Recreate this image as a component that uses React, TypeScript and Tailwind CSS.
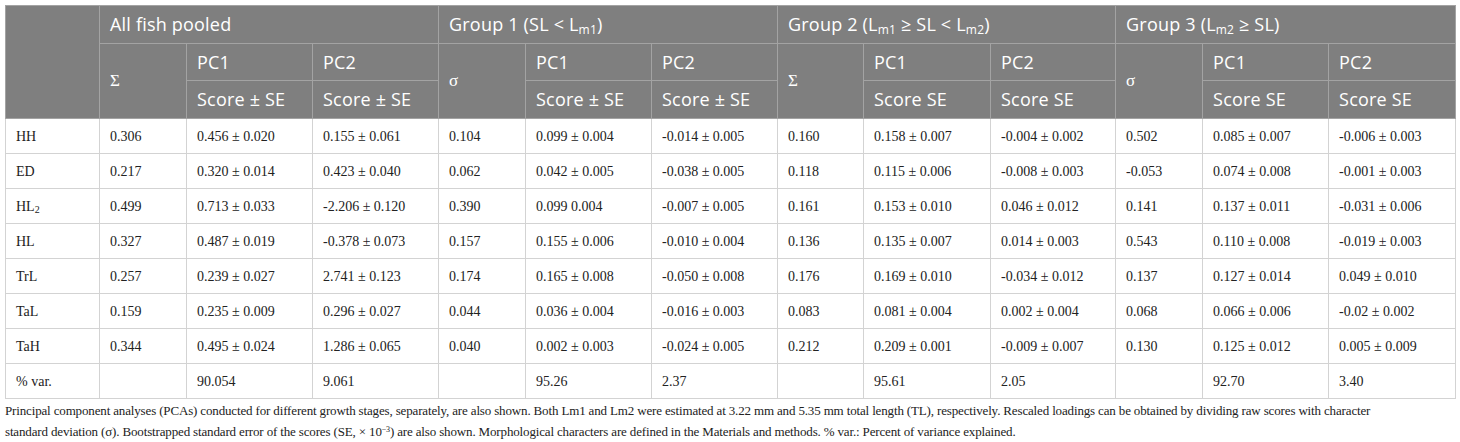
import React from 'react';

const widths = [94, 87, 126, 126, 87, 126, 126, 86, 127, 125, 87, 126, 127];

const rows: [React.ReactNode, ...string[]][] = [
  ['HH', '0.306', '0.456 ± 0.020', '0.155 ± 0.061', '0.104', '0.099 ± 0.004', '-0.014 ± 0.005', '0.160', '0.158 ± 0.007', '-0.004 ± 0.002', '0.502', '0.085 ± 0.007', '-0.006 ± 0.003'],
  ['ED', '0.217', '0.320 ± 0.014', '0.423 ± 0.040', '0.062', '0.042 ± 0.005', '-0.038 ± 0.005', '0.118', '0.115 ± 0.006', '-0.008 ± 0.003', '-0.053', '0.074 ± 0.008', '-0.001 ± 0.003'],
  [
    <>
      HL<sub className="text-[10px]">2</sub>
    </>,
    '0.499', '0.713 ± 0.033', '-2.206 ± 0.120', '0.390', '0.099 0.004', '-0.007 ± 0.005', '0.161', '0.153 ± 0.010', '0.046 ± 0.012', '0.141', '0.137 ± 0.011', '-0.031 ± 0.006',
  ],
  ['HL', '0.327', '0.487 ± 0.019', '-0.378 ± 0.073', '0.157', '0.155 ± 0.006', '-0.010 ± 0.004', '0.136', '0.135 ± 0.007', '0.014 ± 0.003', '0.543', '0.110 ± 0.008', '-0.019 ± 0.003'],
  ['TrL', '0.257', '0.239 ± 0.027', '2.741 ± 0.123', '0.174', '0.165 ± 0.008', '-0.050 ± 0.008', '0.176', '0.169 ± 0.010', '-0.034 ± 0.012', '0.137', '0.127 ± 0.014', '0.049 ± 0.010'],
  ['TaL', '0.159', '0.235 ± 0.009', '0.296 ± 0.027', '0.044', '0.036 ± 0.004', '-0.016 ± 0.003', '0.083', '0.081 ± 0.004', '0.002 ± 0.004', '0.068', '0.066 ± 0.006', '-0.02 ± 0.002'],
  ['TaH', '0.344', '0.495 ± 0.024', '1.286 ± 0.065', '0.040', '0.002 ± 0.003', '-0.024 ± 0.005', '0.212', '0.209 ± 0.001', '-0.009 ± 0.007', '0.130', '0.125 ± 0.012', '0.005 ± 0.009'],
  ['% var.', '', '90.054', '9.061', '', '95.26', '2.37', '', '95.61', '2.05', '', '92.70', '3.40'],
];

const th = 'border border-[#a3a3a3] px-[10px] text-left font-normal align-middle';
const td = 'border border-[#d3d3d3] px-[10px] text-left align-middle';

function Sub({ children }: { children: React.ReactNode }) {
  return <sub className="text-[12px]">{children}</sub>;
}

export default function App() {
  const groups = [
    { title: <>All fish pooled</>, sym: 'Σ', se: 'Score ± SE' },
    {
      title: (
        <>
          Group 1 (SL &lt; L<Sub>m1</Sub>)
        </>
      ),
      sym: 'σ',
      se: 'Score ± SE',
    },
    {
      title: (
        <>
          Group 2 (L<Sub>m1</Sub> ≥ SL &lt; L<Sub>m2</Sub>)
        </>
      ),
      sym: 'Σ',
      se: 'Score SE',
    },
    {
      title: (
        <>
          Group 3 (L<Sub>m2</Sub> ≥ SL)
        </>
      ),
      sym: 'σ',
      se: 'Score SE',
    },
  ];

  return (
    <div className="bg-white p-[5px]">
      <table className="table-fixed border-collapse w-[1450px]">
        <colgroup>
          {widths.map((w, i) => (
            <col key={i} style={{ width: w }} />
          ))}
        </colgroup>
        <thead className="bg-[#7f7f7f] text-white font-['Open_Sans',sans-serif] text-[18px] tracking-[0.2px]">
          <tr className="h-[38px]">
            <th rowSpan={3} className={th}></th>
            {groups.map((g, i) => (
              <th key={i} colSpan={3} className={th}>
                {g.title}
              </th>
            ))}
          </tr>
          <tr className="h-[37px]">
            {groups.map((g, i) => (
              <React.Fragment key={i}>
                <th rowSpan={2} className={`${th} font-['Liberation_Serif',serif] text-[17px]`}>
                  {g.sym}
                </th>
                <th className={th}>PC1</th>
                <th className={th}>PC2</th>
              </React.Fragment>
            ))}
          </tr>
          <tr className="h-[38px]">
            {groups.map((g, i) => (
              <React.Fragment key={i}>
                <th className={th}>{g.se}</th>
                <th className={th}>{g.se}</th>
              </React.Fragment>
            ))}
          </tr>
        </thead>
        <tbody className="font-['Liberation_Serif',serif] text-[14px] text-[#222]">
          {rows.map((r, i) => (
            <tr key={i} className="h-[35px]">
              {r.map((c, j) => (
                <td key={j} className={td}>
                  {c}
                </td>
              ))}
            </tr>
          ))}
        </tbody>
      </table>
      <p className="mt-[1px] font-['Liberation_Serif',serif] text-[13px] tracking-[-0.15px] leading-[21px] text-[#222] whitespace-nowrap">
        Principal component analyses (PCAs) conducted for different growth stages, separately, are also shown. Both Lm1 and Lm2 were estimated at 3.22 mm and 5.35 mm total length (TL), respectively. Rescaled loadings can be obtained by dividing raw scores with character
        <br />
        standard deviation (σ). Bootstrapped standard error of the scores (SE, × 10<sup className="text-[8px]">−3</sup>) are also shown. Morphological characters are defined in the Materials and methods. % var.: Percent of variance explained.
      </p>
    </div>
  );
}
